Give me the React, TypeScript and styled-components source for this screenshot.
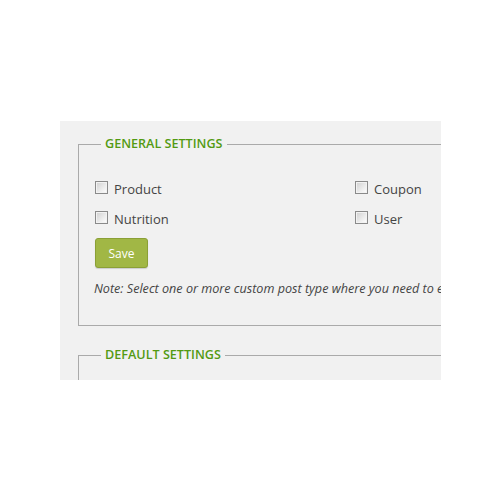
import React from "react";
import styled, { createGlobalStyle } from "styled-components";

const Global = createGlobalStyle`
  html, body { margin: 0; padding: 0; background: #fff; }
  body { font-family: "Open Sans", "DejaVu Sans", sans-serif; color: #444; }
`;

const Panel = styled.div`
  margin: 121px 0 0 60px;
  width: 381px;
  height: 259px;
  background: #f1f1f1;
  overflow: hidden;
`;

const Inner = styled.div`
  width: 700px;
  padding: 14px 0 0 18px;
  display: flex;
  flex-direction: column;
  gap: 20px;
`;

const Fieldset = styled.fieldset`
  margin: 0;
  border: 1px solid #aaa;
  padding: 6px 16px 27px 16px;
  min-width: 0;
  min-height: 60px;
`;

const Legend = styled.legend`
  margin-left: 6px;
  padding: 0 4px;
  font-size: 12.6px;
  line-height: 18px;
  font-weight: 600;
  color: #539a12;
  text-transform: uppercase;
`;

const Grid = styled.div`
  display: grid;
  grid-template-columns: 260px 260px;
  row-gap: 10px;
  margin-top: 20px;
`;

const Option = styled.label`
  display: flex;
  align-items: center;
  gap: 6px;
  font-size: 13px;
  line-height: 20px;
  color: #444;
`;

const Check = styled.input`
  appearance: none;
  margin: 0;
  width: 13px;
  height: 13px;
  border: 1px solid #8a8a8a;
  background: linear-gradient(135deg, #cfcfcf 0%, #efefef 65%, #ffffff 100%);
  box-shadow: inset 0 0 0 1px #f2f2f2;
  position: relative;
  top: -2px;
`;

const SaveButton = styled.button`
  margin-top: 9px;
  width: 53px;
  height: 30px;
  background: #a1b745;
  border: 1px solid #8ba036;
  border-radius: 3px;
  color: #fff;
  font-family: "Open Sans", "DejaVu Sans", sans-serif;
  font-size: 12px;
  padding: 0;
  box-shadow: 0 1px 1px rgba(0, 0, 0, 0.15);
`;

const Note = styled.p`
  margin: 12px 0 0 -1px;
  font-size: 12.6px;
  font-style: italic;
  color: #444;
  line-height: 18px;
  white-space: nowrap;
`;

const types = ["Product", "Coupon", "Nutrition", "User"];

export default function App() {
  return (
    <>
      <Global />
      <Panel>
        <Inner>
          <Fieldset>
            <Legend>General Settings</Legend>
            <Grid>
              {types.map((t) => (
                <Option key={t}>
                  <Check type="checkbox" />
                  {t}
                </Option>
              ))}
            </Grid>
            <SaveButton>Save</SaveButton>
            <Note>
              Note: Select one or more custom post type where you need to enable these settings.
            </Note>
          </Fieldset>
          <Fieldset>
            <Legend>Default Settings</Legend>
          </Fieldset>
        </Inner>
      </Panel>
    </>
  );
}
